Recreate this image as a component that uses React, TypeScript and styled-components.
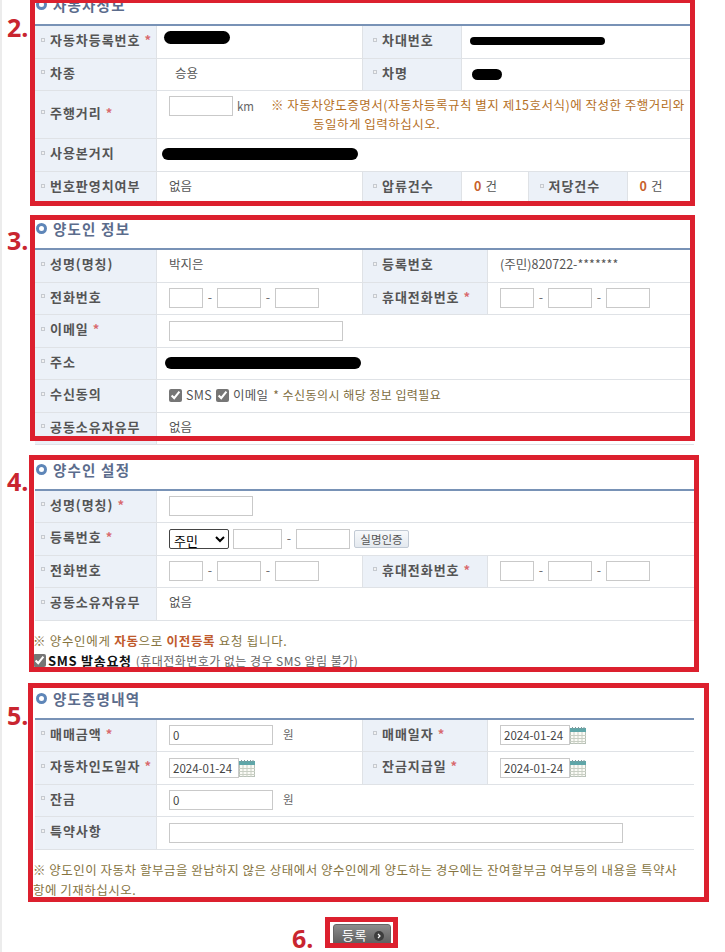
import styled, { createGlobalStyle } from "styled-components";

const GlobalStyle = createGlobalStyle`
  html, body {
    margin: 0;
    height: 952px;
    overflow: hidden;
    background: #fff;
  }
  body, input, select, button {
    font-family: "Noto Sans CJK KR", "Noto Sans", sans-serif;
  }
`;

const Page = styled.div`
  position: relative;
  box-sizing: border-box;
  width: 725px;
  height: 965px;
  margin-top: -13px;
  padding: 0 31px 0 35px;
  font-size: 12.5px;
  color: #555;
  box-shadow: inset 2px 0 0 #ececec;
`;

const Section = styled.section`
  margin-bottom: 6.5px;
`;

const Heading = styled.h3`
  box-sizing: border-box;
  display: flex;
  align-items: center;
  gap: 6px;
  height: 39px;
  margin: 0;
  padding: 0 0 2px 1px;
  border-bottom: 2px solid #7892b6;
  font-size: 14.5px;
  font-weight: 700;
  letter-spacing: 1.2px;
  color: #5b6c8c;

  &::before {
    content: "";
    box-sizing: border-box;
    width: 11px;
    height: 11px;
    border: 3px solid #5e86b8;
    border-radius: 50%;
  }
`;

const Row = styled.div<{ $cols: string; $h?: number }>`
  box-sizing: border-box;
  display: grid;
  grid-template-columns: ${p => p.$cols};
  height: ${p => p.$h ?? 32.5}px;
  border-bottom: 1px solid #dfe2e6;
`;

const Label = styled.div<{ $inset?: number }>`
  display: flex;
  align-items: center;
  padding: 0 0 4px ${p => p.$inset ?? 6}px;
  background: #ecf1f8;
  border-right: 1px solid #dfe2e6;
  border-left: ${p => (p.$inset ? "1px solid #dfe2e6" : "0")};
  font-size: 13px;
  font-weight: 700;
  letter-spacing: 0.95px;
  color: #555;
  white-space: nowrap;

  &::before {
    content: "";
    flex: none;
    box-sizing: border-box;
    width: 4px;
    height: 4px;
    margin-right: 5px;
    border: 1px solid #c6cad0;
    background: #f2f2f2;
  }
`;

const Star = styled.span`
  margin-left: 4px;
  color: #d8696f;
`;

const Value = styled.div<{ $pad?: number; $top?: boolean }>`
  display: flex;
  align-items: ${p => (p.$top ? "flex-start" : "center")};
  padding-left: ${p => p.$pad ?? 12}px;
  white-space: nowrap;
  min-width: 0;
`;

const Text = styled.span`
  margin-bottom: 4px;
`;

const Redact = styled.span<{ $w: number; $h: number; $x: number; $lift?: number }>`
  width: ${p => p.$w}px;
  height: ${p => p.$h}px;
  margin: 0 0 ${p => (p.$lift ?? 0) * 2}px ${p => p.$x}px;
  border-radius: ${p => p.$h / 2}px;
  background: #000;
`;

const Field = styled.input<{ $w: number }>`
  box-sizing: border-box;
  flex: none;
  width: ${p => p.$w}px;
  height: 20px;
  padding: 0 3px;
  border: 1px solid #c9c9c9;
  border-radius: 0;
  background: #fff;
  font-size: 11.5px;
  color: #444;
  outline: none;
`;

const Dash = styled.span`
  flex: none;
  width: 14px;
  margin-bottom: 3px;
  text-align: center;
  color: #666;
`;

const Unit = styled.span<{ $gap: number }>`
  margin: 0 0 3px ${p => p.$gap}px;
  font-size: 11.5px;
  color: #666;
`;

const Notice = styled.div`
  margin: 4px 0 0 17px;
  font-size: 12.5px;
  letter-spacing: 0.5px;
  line-height: 19px;
  color: #b5701f;
`;

const NoticeTail = styled.span`
  display: block;
  padding-left: 42px;
`;

const Count = styled.b`
  margin-right: 4px;
  color: #c8622c;
`;

const Tick = styled.input`
  flex: none;
  width: 13px;
  height: 13px;
  margin: 0 4px 0 0;
  accent-color: #767676;
`;

const TickLabel = styled.span`
  margin: 0 4px 3px 0;
  letter-spacing: 0.3px;
`;

const Hint = styled.span`
  margin: 0 0 3px 1px;
  font-size: 12px;
  letter-spacing: 0.45px;
  color: #7d6c40;
`;

const Select = styled.select`
  box-sizing: border-box;
  flex: none;
  width: 60px;
  height: 20px;
  margin-right: 4px;
  padding: 0;
  border: 1px solid #444;
  border-radius: 2px;
  background: #fff;
  font-size: 13px;
  color: #000;
`;

const VerifyButton = styled.button`
  box-sizing: border-box;
  flex: none;
  width: 55px;
  height: 18px;
  margin-left: 4px;
  padding: 0;
  border: 1px solid #c2cad4;
  border-radius: 2px;
  background: linear-gradient(#f7f9fb, #e4e9ef);
  font-size: 11.5px;
  color: #555;
`;

const NoteBlock = styled.div<{ $track: number; $width?: number }>`
  box-sizing: border-box;
  margin-left: -2px;
  max-width: ${p => (p.$width ? `${p.$width}px` : "none")};
  padding: 10px 0 0;
  line-height: 20px;
  font-size: 12.5px;
  letter-spacing: ${p => p.$track}px;
  color: #86743f;
`;

const NoteLine = styled.div`
  display: flex;
  align-items: center;
  white-space: nowrap;
`;

const Strong = styled.b`
  color: #bf5a2c;
`;

const SmsTick = styled(Tick)`
  margin-right: 2px;
`;

const SmsTitle = styled.b`
  margin-right: 4px;
  font-size: 13px;
  letter-spacing: 0.7px;
  color: #111;
`;

const SmsHint = styled.span`
  font-size: 12px;
  letter-spacing: 0.45px;
  color: #666;
`;

const SectionGap = styled.div`
  height: 3.5px;
`;

const Actions = styled.div`
  display: flex;
  justify-content: center;
  margin-top: 24.5px;
  padding-right: 5px;
`;

const SubmitButton = styled.button`
  box-sizing: border-box;
  display: flex;
  align-items: center;
  justify-content: center;
  gap: 7px;
  width: 58px;
  height: 24px;
  padding: 0 0 3px 2px;
  border: 1px solid #666;
  border-radius: 3px;
  background: linear-gradient(#8c8c8c, #565656);
  font-size: 13px;
  letter-spacing: 0.6px;
  color: #fff;
`;

const Callout = styled.div<{ $x: number; $y: number; $w: number; $h: number }>`
  position: absolute;
  box-sizing: border-box;
  left: ${p => p.$x}px;
  top: ${p => p.$y + 13}px;
  width: ${p => p.$w}px;
  height: ${p => p.$h}px;
  border: 5px solid #dc202e;
  pointer-events: none;
`;

const CalloutNumber = styled.span<{ $x: number; $y: number }>`
  position: absolute;
  left: ${p => p.$x}px;
  top: ${p => p.$y}px;
  font-family: "Open Sans", "Noto Sans", sans-serif;
  font-size: 25px;
  font-weight: 700;
  line-height: 24px;
  color: #c9252f;
`;

function CalendarIcon() {
  return (
    <svg width="16" height="18" viewBox="0 0 16 18" style={{ flex: "none" }}>
      <rect x="0.5" y="2.5" width="15" height="15" fill="#fbfbf6" stroke="#b9c2b8" />
      <rect x="0" y="2" width="16" height="4" fill="#5fa6a8" />
      <path d="M2.5 1v2M5.5 1v2M8.5 1v2M11.5 1v2M14 1v2" stroke="#7f9a9c" />
      <path d="M0 9.5h16M0 12.5h16M0 15.5h16M4 6v12M8 6v12M12 6v12" stroke="#c9cfc4" />
    </svg>
  );
}

function ArrowIcon() {
  return (
    <svg width="10" height="10" viewBox="0 0 10 10" style={{ marginTop: 3 }}>
      <circle cx="5" cy="5" r="5" fill="#3d3d3d" />
      <path d="M4 3l2 2-2 2" fill="none" stroke="#fff" strokeWidth="1.2" />
    </svg>
  );
}

function Phone() {
  return (
    <>
      <Field $w={34} />
      <Dash>-</Dash>
      <Field $w={44} />
      <Dash>-</Dash>
      <Field $w={44} />
    </>
  );
}

const COLS_CAR = "122px 205px 100px 65.5px 100px 1fr";
const COLS_CAR_PAIR = "122px 205px 100px 1fr";
const COLS_PAIR = "122px 205px 126px 1fr";
const COLS_SINGLE = "122px 1fr";

export default function App() {
  return (
    <Page>
      <GlobalStyle />

      <Section>
        <Heading>자동차정보</Heading>
        <Row $cols={COLS_CAR_PAIR}>
          <Label>자동차등록번호<Star>*</Star></Label>
          <Value><Redact $w={66} $h={13} $x={-5} $lift={4} /></Value>
          <Label $inset={10}>차대번호</Label>
          <Value><Redact $w={135} $h={8} $x={-4} $lift={1} /></Value>
        </Row>
        <Row $cols={COLS_CAR_PAIR}>
          <Label>차종</Label>
          <Value $pad={18}><Text>승용</Text></Value>
          <Label $inset={10}>차명</Label>
          <Value><Redact $w={30} $h={11} $x={-2} /></Value>
        </Row>
        <Row $cols={COLS_SINGLE} $h={47.5}>
          <Label>주행거리<Star>*</Star></Label>
          <Value $top>
            <Field $w={64} style={{ marginTop: 5 }} />
            <Unit $gap={4} style={{ marginTop: 7 }}>km</Unit>
            <Notice>
              ※ 자동차양도증명서(자동차등록규칙 별지 제15호서식)에 작성한 주행거리와
              <NoticeTail>동일하게 입력하십시오.</NoticeTail>
            </Notice>
          </Value>
        </Row>
        <Row $cols={COLS_SINGLE} $h={33}>
          <Label>사용본거지</Label>
          <Value><Redact $w={196} $h={12} $x={-7} $lift={1} /></Value>
        </Row>
        <Row $cols={COLS_CAR} $h={33}>
          <Label>번호판영치여부</Label>
          <Value><Text>없음</Text></Value>
          <Label $inset={10}>압류건수</Label>
          <Value><Text><Count>0</Count>건</Text></Value>
          <Label $inset={11}>저당건수</Label>
          <Value><Text><Count>0</Count>건</Text></Value>
        </Row>
      </Section>

      <Section>
        <Heading>양도인 정보</Heading>
        <Row $cols={COLS_PAIR}>
          <Label>성명(명칭)</Label>
          <Value><Text>박지은</Text></Value>
          <Label $inset={10}>등록번호</Label>
          <Value><Text>(주민)820722-*******</Text></Value>
        </Row>
        <Row $cols={COLS_PAIR}>
          <Label>전화번호</Label>
          <Value><Phone /></Value>
          <Label $inset={10}>휴대전화번호<Star>*</Star></Label>
          <Value><Phone /></Value>
        </Row>
        <Row $cols={COLS_SINGLE}>
          <Label>이메일<Star>*</Star></Label>
          <Value><Field $w={174} /></Value>
        </Row>
        <Row $cols={COLS_SINGLE}>
          <Label>주소</Label>
          <Value><Redact $w={196} $h={12} $x={-4} /></Value>
        </Row>
        <Row $cols={COLS_SINGLE}>
          <Label>수신동의</Label>
          <Value>
            <Tick type="checkbox" defaultChecked />
            <TickLabel>SMS</TickLabel>
            <Tick type="checkbox" defaultChecked />
            <TickLabel>이메일</TickLabel>
            <Hint>* 수신동의시 해당 정보 입력필요</Hint>
          </Value>
        </Row>
        <Row $cols={COLS_SINGLE}>
          <Label>공동소유자유무</Label>
          <Value><Text>없음</Text></Value>
        </Row>
      </Section>

      <Section>
        <Heading>양수인 설정</Heading>
        <Row $cols={COLS_SINGLE}>
          <Label>성명(명칭)<Star>*</Star></Label>
          <Value><Field $w={84} /></Value>
        </Row>
        <Row $cols={COLS_SINGLE}>
          <Label>등록번호<Star>*</Star></Label>
          <Value>
            <Select defaultValue="주민">
              <option>주민</option>
            </Select>
            <Field $w={49} />
            <Dash>-</Dash>
            <Field $w={54} />
            <VerifyButton type="button">실명인증</VerifyButton>
          </Value>
        </Row>
        <Row $cols={COLS_PAIR}>
          <Label>전화번호</Label>
          <Value><Phone /></Value>
          <Label $inset={10}>휴대전화번호<Star>*</Star></Label>
          <Value><Phone /></Value>
        </Row>
        <Row $cols={COLS_SINGLE}>
          <Label>공동소유자유무</Label>
          <Value><Text>없음</Text></Value>
        </Row>
        <NoteBlock $track={0.7}>
          <NoteLine>※ 양수인에게&nbsp;<Strong>자동</Strong>으로&nbsp;<Strong>이전등록</Strong>&nbsp;요청 됩니다.</NoteLine>
          <NoteLine>
            <SmsTick type="checkbox" defaultChecked />
            <SmsTitle>SMS 발송요청</SmsTitle>
            <SmsHint>(휴대전화번호가 없는 경우 SMS 알림 불가)</SmsHint>
          </NoteLine>
        </NoteBlock>
        <SectionGap />
      </Section>

      <Section>
        <Heading>양도증명내역</Heading>
        <Row $cols={COLS_PAIR}>
          <Label>매매금액<Star>*</Star></Label>
          <Value><Field $w={104} defaultValue="0" /><Unit $gap={10}>원</Unit></Value>
          <Label $inset={10}>매매일자<Star>*</Star></Label>
          <Value><Field $w={70} defaultValue="2024-01-24" /><CalendarIcon /></Value>
        </Row>
        <Row $cols={COLS_PAIR}>
          <Label>자동차인도일자<Star>*</Star></Label>
          <Value><Field $w={70} defaultValue="2024-01-24" /><CalendarIcon /></Value>
          <Label $inset={10}>잔금지급일<Star>*</Star></Label>
          <Value><Field $w={70} defaultValue="2024-01-24" /><CalendarIcon /></Value>
        </Row>
        <Row $cols={COLS_SINGLE}>
          <Label>잔금</Label>
          <Value><Field $w={104} defaultValue="0" /><Unit $gap={10}>원</Unit></Value>
        </Row>
        <Row $cols={COLS_SINGLE}>
          <Label>특약사항</Label>
          <Value><Field $w={454} /></Value>
        </Row>
        <NoteBlock $track={0.5} $width={652}>
          ※ 양도인이 자동차 할부금을 완납하지 않은 상태에서 양수인에게 양도하는 경우에는 잔여할부금 여부등의 내용을 특약사항에 기재하십시오.
        </NoteBlock>
      </Section>

      <Actions>
        <SubmitButton type="button">등록<ArrowIcon /></SubmitButton>
      </Actions>

      <Callout $x={30} $y={-2} $w={665} $h={208} />
      <Callout $x={30} $y={215} $w={665} $h={226} />
      <Callout $x={29} $y={455} $w={670} $h={217} />
      <Callout $x={28} $y={683} $w={681} $h={219} />
      <Callout $x={325} $y={917} $w={73} $h={31} />

      <CalloutNumber $x={7} $y={28}>2.</CalloutNumber>
      <CalloutNumber $x={7} $y={241}>3.</CalloutNumber>
      <CalloutNumber $x={7} $y={482}>4.</CalloutNumber>
      <CalloutNumber $x={7} $y={716}>5.</CalloutNumber>
      <CalloutNumber $x={292} $y={939}>6.</CalloutNumber>
    </Page>
  );
}
